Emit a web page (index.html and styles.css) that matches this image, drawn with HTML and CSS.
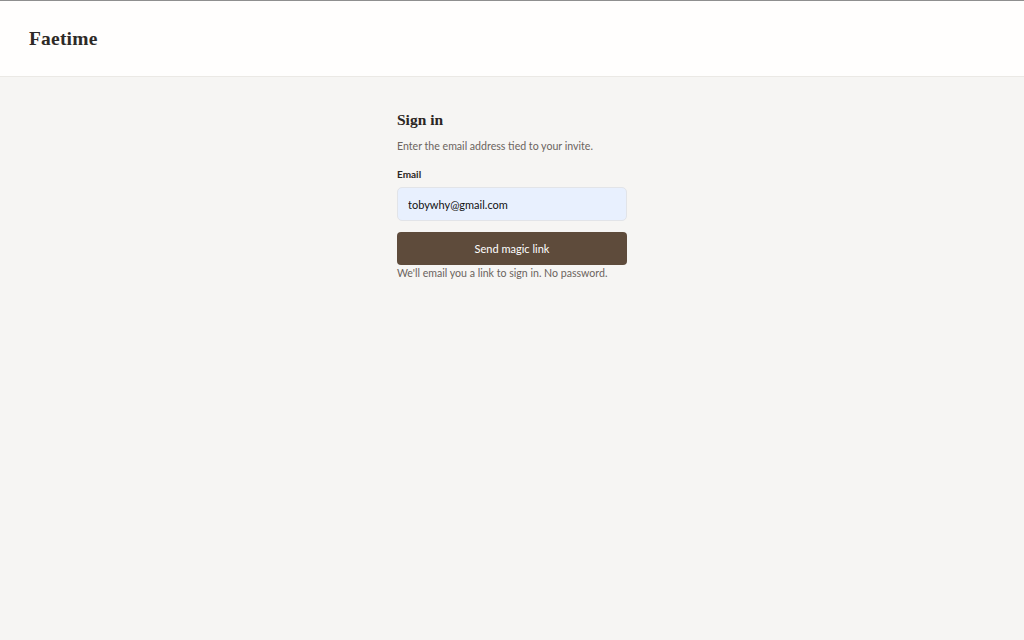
FILE: index.html
```html
<!DOCTYPE html>
<html lang="en">
  <head>
    <meta charset="UTF-8">
    <meta name="viewport" content="width=device-width, initial-scale=1.0">
    <title>Faetime - Sign in</title>
    <link rel="stylesheet" href="styles.css">
  </head>
  <body>
    <!-- Top bar -->
    <header class="topbar">
      <div class="brand">Faetime</div>
    </header>

    <!-- Sign in -->
    <main class="page">
      <form class="signin" method="POST" action="/login">
        <h1 class="signin-title">Sign in</h1>
        <p class="signin-lead">Enter the email address tied to your invite.</p>
        <label class="field-label" for="email">Email</label>
        <input class="field-input" type="email" name="email" id="email" value="tobywhy@gmail.com">
        <button class="btn-primary" type="submit">Send magic link</button>
        <p class="signin-note">We'll email you a link to sign in. No password.</p>
      </form>
    </main>
  </body>
</html>
```

FILE: styles.css
```css
/* Base */
html, body {
  height: 100%;
}

body {
  margin: 0;
  padding: 0;
  background-color: #f6f5f3;
  color: #2b2623;
  font-family: "Lato", "Open Sans", sans-serif;
  border-top: 1px solid #8f8f8f;
}

/* Header */
.topbar {
  height: 75px;
  background: #fffefd;
  border-bottom: 1px solid #ebe9e5;
  display: flex;
  align-items: center;
  padding: 0 29px;
}

.brand {
  font-family: "Liberation Serif", "DejaVu Serif", serif;
  font-weight: bold;
  font-size: 19.5px;
  color: #2e2a27;
  letter-spacing: 0.2px;
}

/* Sign in form */
.page {
  display: flex;
  justify-content: center;
  padding-top: 33px;
}

.signin {
  width: 230px;
  display: flex;
  flex-direction: column;
}

.signin-title {
  margin: 0;
  font-family: "Liberation Serif", "DejaVu Serif", serif;
  font-weight: bold;
  font-size: 15.5px;
  line-height: 20px;
  color: #2b2623;
}

.signin-lead {
  margin: 8px 0 0;
  font-size: 10.6px;
  line-height: 16px;
  color: #6b645e;
}

.field-label {
  margin-top: 13px;
  font-size: 10px;
  line-height: 14px;
  font-weight: bold;
  color: #2b2623;
}

.field-input {
  margin-top: 6px;
  height: 34px;
  box-sizing: border-box;
  padding: 0 10px;
  background: #e8f0fe;
  border: 1px solid #e2e4e8;
  border-radius: 5px;
  font-family: inherit;
  font-size: 11px;
  color: #111;
  outline: none;
}

.btn-primary {
  margin-top: 11px;
  height: 33px;
  background: #5e4b3b;
  color: #fff;
  border: none;
  border-radius: 4px;
  font-family: inherit;
  font-size: 11px;
  cursor: pointer;
}

.signin-note {
  margin: 0;
  font-size: 10.6px;
  line-height: 16px;
  color: #6b645e;
}
```
